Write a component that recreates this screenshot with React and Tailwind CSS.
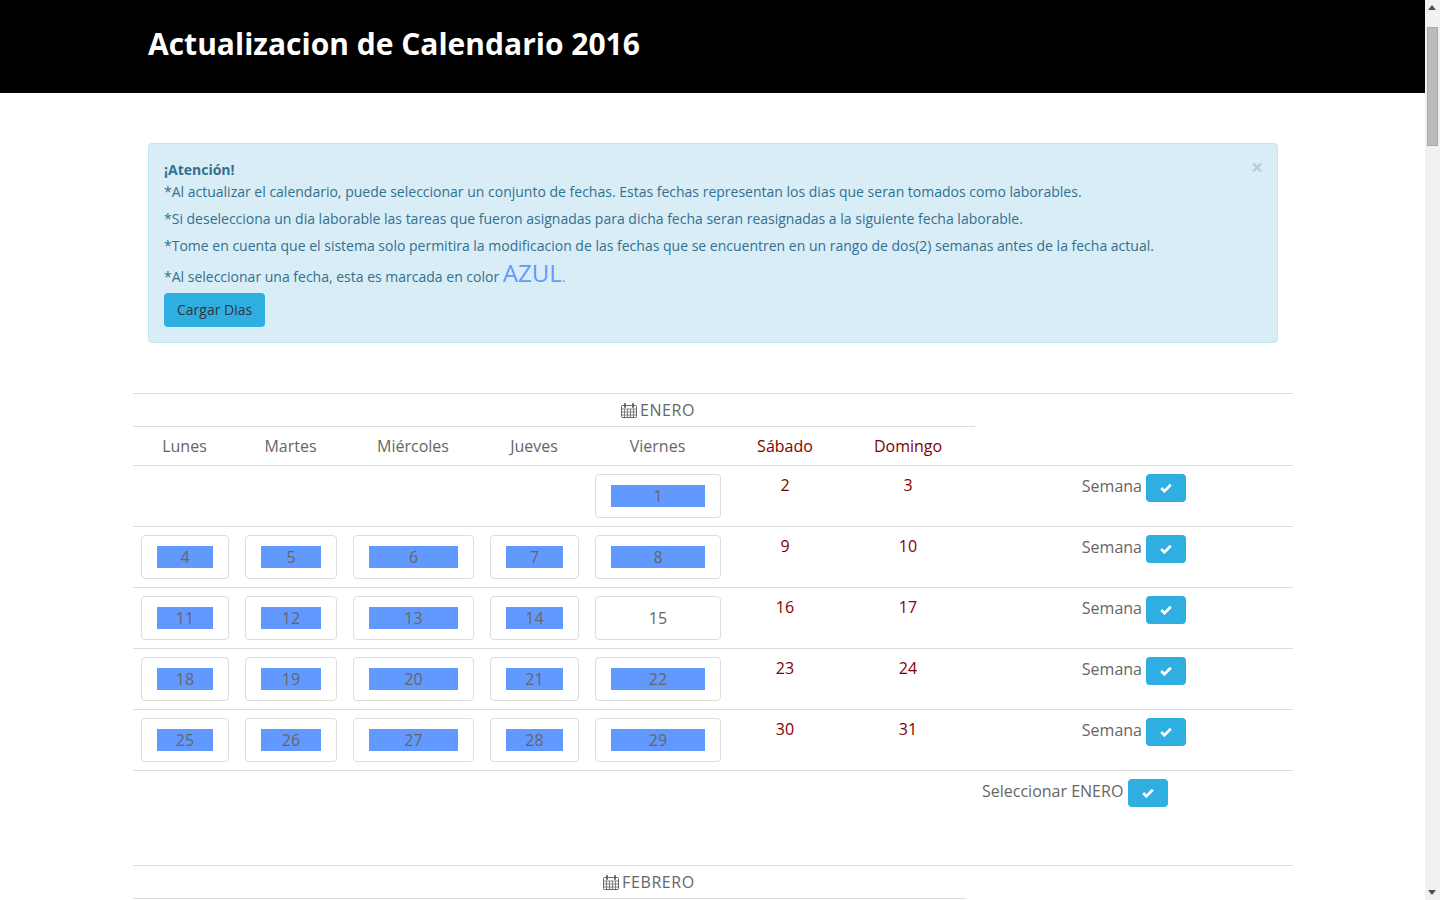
const JAN_COLS = [104, 108, 137, 105, 142, 112, 134];
const FEB_COLS = [102, 107, 135, 102, 140, 112, 135];

const MONTHS = [
  { name: "ENERO", first: 4, days: 31, cols: JAN_COLS },
  { name: "FEBRERO", first: 0, days: 29, cols: FEB_COLS },
];

const DAY_NAMES = ["Lunes", "Martes", "Miércoles", "Jueves", "Viernes", "Sábado", "Domingo"];

function buildWeeks(first, days) {
  const cells = [...Array(first).fill(null)];
  for (let d = 1; d <= days; d++) cells.push(d);
  while (cells.length % 7) cells.push(null);
  const weeks = [];
  for (let i = 0; i < cells.length; i += 7) weeks.push(cells.slice(i, i + 7));
  return weeks;
}

function CalendarIcon() {
  return (
    <svg width="16" height="15" viewBox="0 0 16 15" className="inline-block align-[-2px] mr-[3px]" fill="none" stroke="#666">
      <rect x="0.5" y="2.5" width="15" height="12" rx="1" />
      <path d="M0.5 6h15M0.5 9h15M0.5 12h15M3.5 6v8M6.5 6v8M9.5 6v8M12.5 6v8" strokeWidth="0.8" />
      <path d="M4 1v3M12 1v3" strokeWidth="2" strokeLinecap="round" />
    </svg>
  );
}

function CheckButton({ className = "" }) {
  return (
    <button type="button" className={`w-10 h-7 rounded bg-[#2fafe1] inline-flex items-center justify-center align-top ${className}`}>
      <svg width="12" height="10" viewBox="0 0 12 10" fill="none" stroke="white" strokeWidth="2.7">
        <path d="M1.2 5l3.2 3.2L10.8 1.8" />
      </svg>
    </button>
  );
}

function DayBox({ day }) {
  // dia 15 de enero no esta marcado en la referencia
  const selected = day !== 15;
  return (
    <div className="h-11 rounded border border-[#ddd] px-[15px] py-[10px] flex">
      <span className={`flex-1 h-[22px] text-center leading-[22px] ${selected ? "bg-[#6199ff]" : ""}`}>{day}</span>
    </div>
  );
}

function MonthTable({ name, first, days, cols }) {
  const weeks = buildWeeks(first, days);
  const weekendStart = 5;
  return (
    <table className="w-[1160px] table-fixed border-collapse border-t border-[#ddd] mb-[58px] text-[#666] text-base">
      <colgroup>
        {cols.map((w, i) => (
          <col key={i} style={{ width: w }} />
        ))}
        <col />
      </colgroup>
      <thead>
        <tr>
          <th colSpan={4} className="h-[33px] border-b border-[#ddd]" />
          <th className="h-[33px] border-b border-[#ddd] font-normal text-center whitespace-nowrap tracking-[0.6px]">
            <CalendarIcon />
            {name}
          </th>
          <th colSpan={2} className="h-[33px] border-b border-[#ddd]" />
          <th />
        </tr>
        <tr>
          {DAY_NAMES.map((d, i) => (
            <th key={d} className={`h-[39px] font-normal text-center border-b border-[#ddd] ${i >= weekendStart ? "text-[#800000]" : "pr-px"}`}>
              {d}
            </th>
          ))}
          <th className="border-b border-[#ddd]" />
        </tr>
      </thead>
      <tbody>
        {weeks.map((week, w) => (
          <tr key={w} className="border-b border-[#ddd]">
            {week.map((day, i) =>
              i >= weekendStart ? (
                <td key={i} className="h-[60px] px-2 pt-2 align-top text-center text-[#800000] leading-[22px]">
                  {day}
                </td>
              ) : (
                <td key={i} className="h-[60px] px-2 py-2 align-top">
                  {day && <DayBox day={day} />}
                </td>
              )
            )}
            <td className="pt-2 align-top text-center leading-[24px] whitespace-nowrap">
              Semana <CheckButton />
            </td>
          </tr>
        ))}
        <tr>
          <td colSpan={7} />
          <td className="pt-2 pl-[7px] align-top leading-[24px] whitespace-nowrap">
            Seleccionar {name} <CheckButton className="ml-px" />
          </td>
        </tr>
      </tbody>
    </table>
  );
}

// la barra de scroll del navegador no sale en la captura, se dibuja aparte
function ScrollBar() {
  return (
    <div className="fixed top-0 right-0 bottom-0 w-[15px] bg-[#f1f1f1]">
      <div className="absolute top-[5px] left-[3px] w-0 h-0 border-x-[4.5px] border-x-transparent border-b-[5px] border-b-[#505050]" />
      <div className="absolute top-[27px] left-[2px] w-[11px] h-[119px] bg-[#bcbcbc] border border-[#a9a9a9]" />
      <div className="absolute bottom-[5px] left-[3px] w-0 h-0 border-x-[4.5px] border-x-transparent border-t-[5px] border-t-[#505050]" />
    </div>
  );
}

export default function App() {
  return (
    <div className="font-['Open_Sans',sans-serif] bg-white h-screen overflow-hidden">
      <header className="h-[93px] w-[1425px] bg-black flex items-center pl-[148px] pb-[6px]">
        <h1 className="text-[30px] font-bold text-white">Actualizacion de Calendario 2016</h1>
      </header>

      <div className="w-[1160px] ml-[133px] pt-[50px]">
        <div className="relative mx-[15px] h-[200px] mb-[50px] rounded border border-[#bce8f1] bg-[#d9edf7] px-[15px] pt-[16px] text-sm text-[#31708f]">
          <button type="button" className="absolute right-[14px] top-[13px] text-[21px] leading-[21px] font-bold text-[#31708f]/25">×</button>
          <strong className="block leading-[20px]">¡Atención!</strong>
          <p className="leading-[20px] mb-[7px] mt-[2px]">*Al actualizar el calendario, puede seleccionar un conjunto de fechas. Estas fechas representan los dias que seran tomados como laborables.</p>
          <p className="leading-[20px] mb-[7px]">*Si deselecciona un dia laborable las tareas que fueron asignadas para dicha fecha seran reasignadas a la siguiente fecha laborable.</p>
          <p className="leading-[20px] mb-[2px]">*Tome en cuenta que el sistema solo permitira la modificacion de las fechas que se encuentren en un rango de dos(2) semanas antes de la fecha actual.</p>
          <p className="leading-[30px] mb-px">
            *Al seleccionar una fecha, esta es marcada en color <span className="text-[24px] text-[#6199ff]">AZUL</span><span className="text-[#6199ff]">.</span>
          </p>
          <button type="button" className="h-[34px] px-[13px] rounded bg-[#2fafe1] text-[#333] text-sm">Cargar Dias</button>
        </div>

        {MONTHS.map((m) => (
          <MonthTable key={m.name} {...m} />
        ))}
      </div>

      <ScrollBar />
    </div>
  );
}
